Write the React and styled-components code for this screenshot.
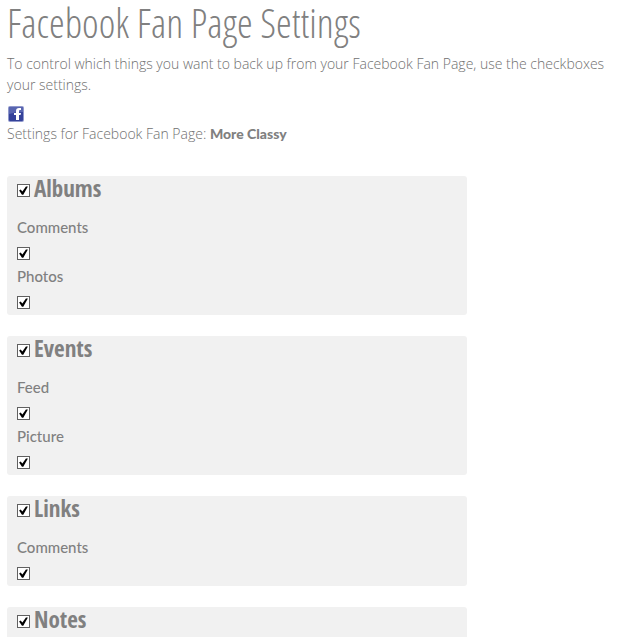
import React, { useState } from 'react';
import styled, { createGlobalStyle } from 'styled-components';

const GlobalStyle = createGlobalStyle`
  body {
    margin: 0;
    background: #fff;
    color: #808080;
    font-family: Lato, 'Open Sans', sans-serif;
    font-size: 15px;
    line-height: 21px;
  }
`;

const Page = styled.main`
  padding: 2px 0 0 7px;
`;

const Title = styled.h1`
  margin: 0 0 9px;
  font-family: 'Open Sans Condensed Light', 'Open Sans Condensed', sans-serif;
  font-size: 40px;
  font-weight: 300;
  line-height: 42px;
`;

const Intro = styled.p`
  margin: 0 0 10px;
  color: #707070;
  font-family: 'Open Sans', Lato, sans-serif;
  font-size: 14px;
  font-weight: 300;
`;

const Account = styled.div`
  margin-bottom: 32px;
  color: #707070;
  font-family: 'Open Sans', Lato, sans-serif;
  font-size: 14px;
  font-weight: 300;
`;

const AccountName = styled.strong`
  color: #808080;
  font-family: Lato, 'Open Sans', sans-serif;
  font-weight: 900;
`;

const Logo = styled.svg`
  display: block;
  width: 18px;
  height: 18px;
`;

const Sections = styled.form`
  display: flex;
  flex-direction: column;
  gap: 21px;
  max-width: 460px;
`;

const Panel = styled.section`
  padding: 0 10px;
  border-radius: 3px;
  background: #f1f1f1;
`;

const Heading = styled.h2`
  display: flex;
  align-items: baseline;
  gap: 4px;
  margin: 0 0 17px;
  font-family: 'Open Sans Condensed', 'Liberation Sans Narrow', sans-serif;
  font-size: 23px;
  font-weight: 700;
  line-height: 24px;
`;

const Option = styled.div`
  display: flex;
  flex-direction: column;
  gap: 9px;
  padding-bottom: 6px;
`;

const Label = styled.label`
  font-weight: 500;
`;

const Checkbox = styled.input.attrs({ type: 'checkbox' })`
  appearance: none;
  flex: none;
  box-sizing: border-box;
  width: 13px;
  height: 13px;
  margin: 0;
  border: 1px solid #606060;
  background: #fff;

  &:checked::before {
    content: '';
    display: block;
    height: 11px;
    background: #000;
    clip-path: polygon(10% 50%, 24% 40%, 40% 58%, 72% 14%, 90% 14%, 48% 88%, 36% 88%);
  }
`;

const groups = [
  { name: 'Albums', options: ['Comments', 'Photos'] },
  { name: 'Events', options: ['Feed', 'Picture'] },
  { name: 'Links', options: ['Comments'] },
  { name: 'Notes', options: ['Comments'] },
];

const Toggle = ({ id }) => {
  const [checked, setChecked] = useState(true);
  return <Checkbox id={id} checked={checked} onChange={() => setChecked(!checked)} />;
};

const FacebookLogo = () => (
  <Logo viewBox="0 0 18 18" role="img" aria-label="Facebook">
    <rect x="1" y="1" width="16" height="16" rx="2" fill="#9098cc" />
    <rect x="2" y="2" width="14" height="14" rx="1" fill="#34429a" />
    <path d="M2 2h14v5Q8 7 2 9z" fill="#5865b0" />
    <path d="M9 15v-5H7V8h2V6q0-3 3-3h2v2h-1q-1 0-1 1v2h2l-.5 2H12v5z" fill="#fff" />
  </Logo>
);

const SettingsGroup = ({ name, options }) => (
  <Panel>
    <Heading>
      <Toggle id={name} />
      <label htmlFor={name}>{name}</label>
    </Heading>
    {options.map((option) => (
      <Option key={option}>
        <Label htmlFor={`${name}-${option}`}>{option}</Label>
        <Toggle id={`${name}-${option}`} />
      </Option>
    ))}
  </Panel>
);

const App = () => {
  return (
    <>
      <GlobalStyle />
      <Page>
        <Title>Facebook Fan Page Settings</Title>
        <Intro>
          To control which things you want to back up from your Facebook Fan Page, use the checkboxes your settings.
        </Intro>
        <Account>
          <FacebookLogo />
          Settings for Facebook Fan Page: <AccountName>More Classy</AccountName>
        </Account>
        <Sections>
          {groups.map((group) => (
            <SettingsGroup key={group.name} {...group} />
          ))}
        </Sections>
      </Page>
    </>
  );
};

export default App;
